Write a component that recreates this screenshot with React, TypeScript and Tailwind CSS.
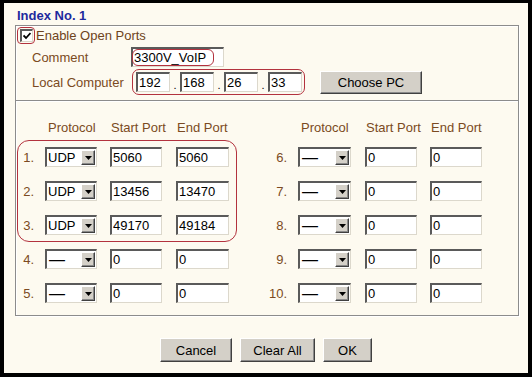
import React from 'react';

type PortRow = { n: string; proto: string; start: string; end: string };

const leftRows: PortRow[] = [
  { n: '1.', proto: 'UDP', start: '5060', end: '5060' },
  { n: '2.', proto: 'UDP', start: '13456', end: '13470' },
  { n: '3.', proto: 'UDP', start: '49170', end: '49184' },
  { n: '4.', proto: '—', start: '0', end: '0' },
  { n: '5.', proto: '—', start: '0', end: '0' },
];

const rightRows: PortRow[] = [
  { n: '6.', proto: '—', start: '0', end: '0' },
  { n: '7.', proto: '—', start: '0', end: '0' },
  { n: '8.', proto: '—', start: '0', end: '0' },
  { n: '9.', proto: '—', start: '0', end: '0' },
  { n: '10.', proto: '—', start: '0', end: '0' },
];

const inset =
  'bg-white border-t-2 border-l-2 border-b border-r border-t-[#5a5a5a] border-l-[#5a5a5a] border-b-[#dcd8cc] border-r-[#dcd8cc]';
const raised =
  'bg-[#d4d0c8] border border-t-white border-l-white border-b-[#404040] border-r-[#404040] shadow-[inset_-1px_-1px_0_#8a8a8a] text-black';

function TextBox({ value, className }: { value: string; className: string }) {
  return (
    <input
      readOnly
      value={value}
      className={`${inset} ${className} h-[20px] pl-[1px] text-[13px] text-black outline-none`}
    />
  );
}

function Dropdown({ value }: { value: string }) {
  const dash = value === '—';
  return (
    <div className={`${inset} flex h-[20px] items-center justify-between pl-[1px] pr-[1px]`}>
      <span className={dash ? 'pl-[1px] text-[16px] leading-none' : 'text-[13px] leading-none'}>{value}</span>
      <span className={`${raised} flex h-[15px] w-[14px] items-center justify-center`}>
        <svg width="7" height="4" viewBox="0 0 7 4">
          <path d="M0 0h7L3.5 4z" fill="#000" />
        </svg>
      </span>
    </div>
  );
}

function PortGroup({ row, labelW, gaps, widths }: {
  row: PortRow;
  labelW: string;
  gaps: [string, string, string];
  widths: [string, string, string];
}) {
  return (
    <div className="flex items-center">
      <span className={`${labelW} text-right text-[#7b4a22]`}>{row.n}</span>
      <div className={`${gaps[0]} ${widths[0]}`}>
        <Dropdown value={row.proto} />
      </div>
      <TextBox value={row.start} className={`${gaps[1]} ${widths[1]}`} />
      <TextBox value={row.end} className={`${gaps[2]} ${widths[2]}`} />
    </div>
  );
}

function Headers({ labelW, gaps, widths }: {
  labelW: string;
  gaps: [string, string, string];
  widths: [string, string, string];
}) {
  return (
    <div className="flex text-[#7b4a22]">
      <span className={labelW} />
      <span className={`${gaps[0]} ${widths[0]} pl-[3px]`}>Protocol</span>
      <span className={`${gaps[1]} ${widths[1]} whitespace-nowrap pl-[1px]`}>Start Port</span>
      <span className={`${gaps[2]} ${widths[2]} whitespace-nowrap pl-[1px]`}>End Port</span>
    </div>
  );
}

const leftCfg = {
  labelW: 'w-[18px]',
  gaps: ['ml-[11px]', 'ml-[13px]', 'ml-[14px]'] as [string, string, string],
  widths: ['w-[52px]', 'w-[52px]', 'w-[53px]'] as [string, string, string],
};
const rightCfg = {
  labelW: 'w-[58px]',
  gaps: ['ml-[11px]', 'ml-[14px]', 'ml-[13px]'] as [string, string, string],
  widths: ['w-[53px]', 'w-[52px]', 'w-[52px]'] as [string, string, string],
};

export default function App() {
  return (
    <div className="h-[384px] w-[532px] bg-white font-['Liberation_Sans',Arial,sans-serif] text-[13px] leading-[15px]">
      <div className="h-[377px] border-x-4 border-t-[3px] border-b-4 border-black bg-[#fdfaf0]">
        <div className="pl-[13px] pt-[5px] font-bold text-[#1d2a9e]">Index No. 1</div>

        <div className="ml-[11px] mt-[2px] w-[504px] border border-[#8c8c8c] shadow-[inset_1px_1px_0_#fff,1px_1px_0_#fff]">
          {/* Enable */}
          <div className="ml-[1px] mt-[1px] flex h-[17px] items-center">
            <div className="flex h-[17px] w-[18px] items-center justify-center rounded-[4px] border border-[#b3323e]">
              <div className={`${inset} flex h-[13px] w-[13px] items-center justify-center`}>
                <svg width="8" height="8" viewBox="0 0 8 8">
                  <path d="M0.5 3.5 L3 6 L7.5 1" stroke="#000" strokeWidth="1.8" fill="none" />
                </svg>
              </div>
            </div>
            <span className="ml-[1px] text-[#6e4320]">Enable Open Ports</span>
          </div>

          {/* Comment */}
          <div className="mt-[3px] flex h-[20px] items-center pl-[16px]">
            <span className="w-[99px] text-[#7b4a22]">Comment</span>
            <div className="relative">
              <TextBox value="3300V_VoIP" className="w-[93px]" />
              <div className="pointer-events-none absolute left-[1px] top-[2px] h-[17px] w-[82px] rounded-[6px] border border-[#b3323e]" />
            </div>
          </div>

          {/* Local Computer */}
          <div className="mt-[2px] flex h-[26px] items-center pl-[16px]">
            <span className="w-[100px] text-[#7b4a22]">Local Computer</span>
            <div className="flex h-[26px] items-center rounded-[7px] border border-[#b3323e] pl-[3px] pr-[2px]">
              <TextBox value="192" className="w-[34px]" />
              <span className="w-[10px] self-end pb-[3px] text-center text-[11px] leading-none">.</span>
              <TextBox value="168" className="w-[34px]" />
              <span className="w-[10px] self-end pb-[3px] text-center text-[11px] leading-none">.</span>
              <TextBox value="26" className="w-[34px]" />
              <span className="w-[10px] self-end pb-[3px] text-center text-[11px] leading-none">.</span>
              <TextBox value="33" className="w-[34px]" />
            </div>
            <button className={`${raised} ml-[15px] h-[23px] w-[102px] text-[13px]`}>Choose PC</button>
          </div>

          {/* divider */}
          <div className="mt-[5px] h-[2px] border-t border-[#8c8c8c] bg-white" />

          {/* Ports */}
          <div className="relative pb-[12px] pt-[18px]">
            <div className="flex">
              <Headers {...leftCfg} />
              <Headers {...rightCfg} />
            </div>
            <div className="mt-[12px] flex flex-col gap-[14px]">
              {leftRows.map((r, i) => (
                <div key={r.n} className="flex">
                  <PortGroup row={r} {...leftCfg} />
                  <PortGroup row={rightRows[i]} {...rightCfg} />
                </div>
              ))}
            </div>
            <div className="pointer-events-none absolute left-[1px] top-[38px] h-[102px] w-[220px] rounded-[12px] border border-[#b3323e]" />
          </div>
        </div>

        <div className="mt-[22px] flex justify-center gap-[8px]">
          <button className={`${raised} h-[24px] w-[72px] text-[13px]`}>Cancel</button>
          <button className={`${raised} h-[24px] w-[75px] text-[13px]`}>Clear All</button>
          <button className={`${raised} h-[24px] w-[49px] text-[13px]`}>OK</button>
        </div>
      </div>
    </div>
  );
}
